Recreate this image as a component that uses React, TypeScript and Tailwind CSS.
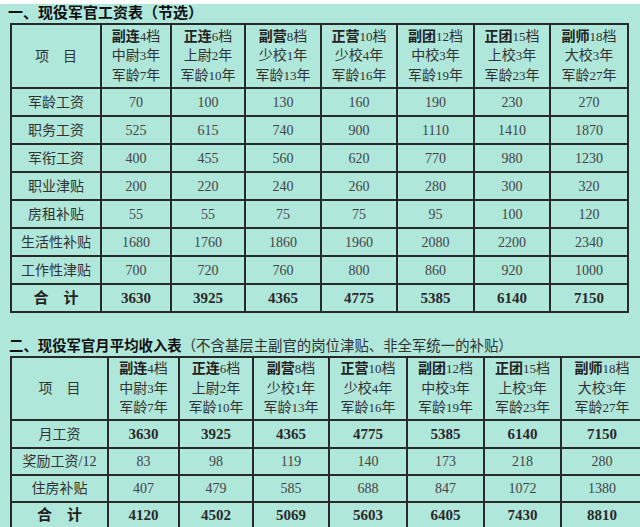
import React from "react";

type Rank = { name: string; grade: string; title: string; years: string; age: string };

const ranks: Rank[] = [
  { name: "副连", grade: "4", title: "中尉", years: "3", age: "7" },
  { name: "正连", grade: "6", title: "上尉", years: "2", age: "10" },
  { name: "副营", grade: "8", title: "少校", years: "1", age: "13" },
  { name: "正营", grade: "10", title: "少校", years: "4", age: "16" },
  { name: "副团", grade: "12", title: "中校", years: "3", age: "19" },
  { name: "正团", grade: "15", title: "上校", years: "3", age: "23" },
  { name: "副师", grade: "18", title: "大校", years: "3", age: "27" },
];

type Row = { label: string; values: number[]; bold?: boolean; total?: boolean };

const salaryRows: Row[] = [
  { label: "军龄工资", values: [70, 100, 130, 160, 190, 230, 270] },
  { label: "职务工资", values: [525, 615, 740, 900, 1110, 1410, 1870] },
  { label: "军衔工资", values: [400, 455, 560, 620, 770, 980, 1230] },
  { label: "职业津贴", values: [200, 220, 240, 260, 280, 300, 320] },
  { label: "房租补贴", values: [55, 55, 75, 75, 95, 100, 120] },
  { label: "生活性补贴", values: [1680, 1760, 1860, 1960, 2080, 2200, 2340] },
  { label: "工作性津贴", values: [700, 720, 760, 800, 860, 920, 1000] },
  { label: "合　计", values: [3630, 3925, 4365, 4775, 5385, 6140, 7150], bold: true, total: true },
];

const incomeRows: Row[] = [
  { label: "月工资", values: [3630, 3925, 4365, 4775, 5385, 6140, 7150], bold: true },
  { label: "奖励工资/12", values: [83, 98, 119, 140, 173, 218, 280] },
  { label: "住房补贴", values: [407, 479, 585, 688, 847, 1072, 1380] },
  { label: "合　计", values: [4120, 4502, 5069, 5603, 6405, 7430, 8810], bold: true, total: true },
];

const cell = "border-2 border-[#262b2a] p-0 text-center align-middle";
const font = { fontFamily: '"Liberation Serif", "Noto Sans CJK SC", serif' };

function HeaderRow({ height }: { height: string }) {
  return (
    <tr className={height}>
      <td className={`${cell} text-[14px] text-[#333]`}>项　目</td>
      {ranks.map((r) => (
        <td key={r.name} className={`${cell} text-[14px] leading-[19.5px] text-[#333]`}>
          <div>
            <span className="font-bold text-[#222]">{r.name}</span>
            <span className="text-[13px]">{r.grade}</span>档
          </div>
          <div>
            {r.title}
            <span className="text-[13px]">{r.years}</span>年
          </div>
          <div>
            军龄<span className="text-[13px]">{r.age}</span>年
          </div>
        </td>
      ))}
    </tr>
  );
}

function DataRow({ row, height }: { row: Row; height: string }) {
  return (
    <tr className={height}>
      <td
        className={`${cell} ${row.total ? "text-[15px] font-semibold text-[#222]" : "text-[14px] text-[#333]"}`}
      >
        {row.label}
      </td>
      {row.values.map((v, i) => (
        <td
          key={i}
          className={`${cell} ${row.bold ? "text-[15px] font-bold text-[#2a2a2a]" : "text-[14px] text-[#444]"}`}
        >
          {v}
        </td>
      ))}
    </tr>
  );
}

export default function App() {
  return (
    <div className="w-[640px] h-[527px] overflow-hidden bg-white pt-[4px]" style={font}>
      <div className="bg-[#afe7db] h-[523px]">
        <div className="mr-[5px]">
          <h2 className="h-[19px] pl-[8px] text-[15px] leading-[19px] font-bold text-[#111]">
            一、现役军官工资表（节选）
          </h2>
          <table className="ml-[10px] w-[617px] table-fixed border-collapse">
            <colgroup>
              <col className="w-[90px]" />
              <col className="w-[70px]" />
              <col className="w-[74px]" />
              <col className="w-[76px]" />
              <col className="w-[76px]" />
              <col className="w-[77px]" />
              <col className="w-[76px]" />
              <col className="w-[78px]" />
            </colgroup>
            <tbody>
              <HeaderRow height="h-[64px]" />
              {salaryRows.map((row) => (
                <DataRow key={row.label} row={row} height="h-[28px]" />
              ))}
            </tbody>
          </table>
        </div>

        <h2 className="mt-[23px] h-[20px] pl-[9px] text-[14.4px] leading-[20px] text-[#111]">
          <span className="font-bold">二、现役军官月平均收入表</span>
          <span className="text-[#333]">（不含基层主副官的岗位津贴、非全军统一的补贴）</span>
        </h2>
        <table className="ml-[10px] w-[632px] table-fixed border-collapse">
          <colgroup>
            <col className="w-[97px]" />
            <col className="w-[71px]" />
            <col className="w-[74px]" />
            <col className="w-[76px]" />
            <col className="w-[78px]" />
            <col className="w-[77px]" />
            <col className="w-[77px]" />
            <col className="w-[82px]" />
          </colgroup>
          <tbody>
            <HeaderRow height="h-[63px]" />
            {incomeRows.map((row, i) => (
              <DataRow key={row.label + i} row={row} height={i === 0 ? "h-[28px]" : "h-[27px]"} />
            ))}
          </tbody>
        </table>
      </div>
    </div>
  );
}
